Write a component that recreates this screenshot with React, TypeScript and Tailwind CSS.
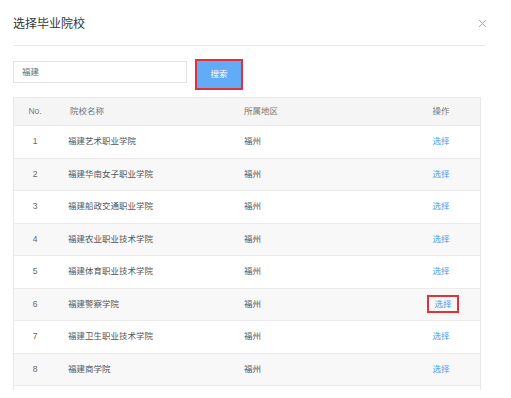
import React from 'react';

const schools = [
  '福建艺术职业学院',
  '福建华南女子职业学院',
  '福建船政交通职业学院',
  '福建农业职业技术学院',
  '福建体育职业技术学院',
  '福建警察学院',
  '福建卫生职业技术学院',
  '福建商学院',
];

const font = { fontFamily: '"Liberation Sans", "Noto Sans CJK SC", sans-serif' };

const App: React.FC = () => {
  return (
    <div className="w-[511px] h-[398px] bg-white overflow-hidden" style={font}>
      {/* header */}
      <div className="ml-[13px] w-[472px] h-[46px] border-b border-[#e9e9e9] flex items-center justify-between pt-[3px]">
        <span className="text-[12px] text-[#333] leading-none">选择毕业院校</span>
        <svg width="9" height="9" viewBox="0 0 9 9" className="mr-[-2px] mt-[-2px]">
          <path d="M1 1L8 8M8 1L1 8" stroke="#aaa" strokeWidth="1" />
        </svg>
      </div>

      {/* search */}
      <div className="ml-[13px] mt-[13px] flex items-start">
        <div className="mt-[2px] w-[174px] h-[22px] border border-[#e3e3e3] flex items-center pl-[8px] text-[8.5px] text-[#666]">
          福建
        </div>
        <div className="ml-[8px] w-[48px] h-[31px] border-2 border-[#e5303a] bg-[#62abf6] flex items-center justify-center text-[8.5px] text-white">
          搜索
        </div>
      </div>

      {/* table */}
      <div className="ml-[13px] mt-[7px] w-[468px] h-[293px] border-x border-t border-[#e8e8e8] overflow-hidden">
        <div className="grid grid-cols-[42px_176px_170px_1fr] h-[28px] bg-[#f5f5f5] border-b border-[#e8e8e8] items-center text-[8.5px] text-[#777]">
          <span className="text-center">No.</span>
          <span className="pl-[14px]">院校名称</span>
          <span className="pl-[12px]">所属地区</span>
          <span className="text-center">操作</span>
        </div>
        {schools.map((name, i) => (
          <div
            key={name}
            className={`grid grid-cols-[42px_176px_170px_1fr] h-[32.5px] border-b border-[#ebebeb] items-center text-[8.5px] text-[#555] ${
              i % 2 === 1 ? 'bg-[#f8f8f8]' : 'bg-white'
            }`}
          >
            <span className="text-center text-[#666]">{i + 1}</span>
            <span className="pl-[12px]">{name}</span>
            <span className="pl-[12px]">福州</span>
            <span className="flex justify-center">
              {i === 5 ? (
                <span className="ml-[4px] w-[32px] h-[18px] border-2 border-[#e5303a] flex items-center justify-center text-[#3d9bf2]">
                  选择
                </span>
              ) : (
                <span className="text-[#3d9bf2]">选择</span>
              )}
            </span>
          </div>
        ))}
        <div className="h-[32.5px] bg-white" />
      </div>
    </div>
  );
};

export default App;
